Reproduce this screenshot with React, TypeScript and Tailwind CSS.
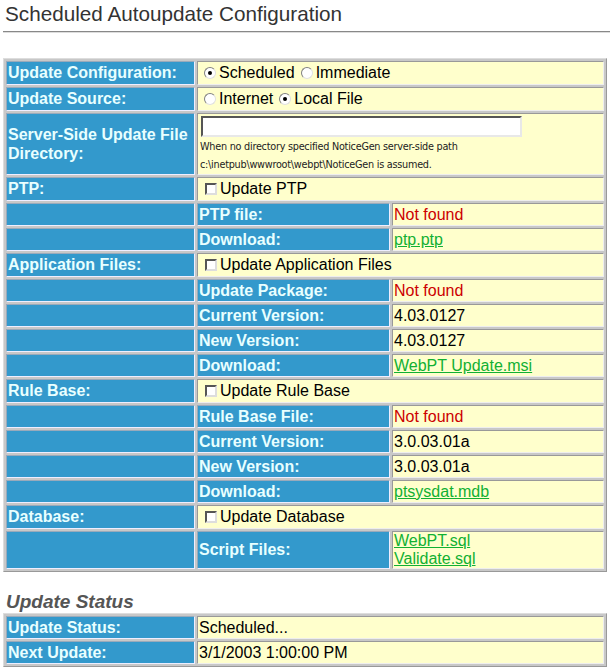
import React from 'react'

const LABEL = 'bg-[#3399cc] text-[#e8ffff] font-bold px-[1px] py-0 align-middle border border-t-[#9ab] border-l-[#9ab] border-b-[#eef] border-r-[#eef]'
const VALUE = 'bg-[#ffffcc] text-black px-[1px] py-0 align-middle border border-t-[#999] border-l-[#999] border-b-[#eee] border-r-[#eee] whitespace-nowrap'
const LINK = 'text-[#11b033] underline'

function Radio({ checked }: { checked?: boolean }) {
  return (
    <span className="flex items-center justify-center w-[12px] h-[12px] rounded-full bg-white border border-t-[#808080] border-l-[#808080] border-b-[#e0e0e0] border-r-[#e0e0e0] ml-[5px] mr-[3px]">
      {checked && <span className="block w-[4px] h-[4px] rounded-full bg-black" />}
    </span>
  )
}

function Check() {
  return (
    <span className="block w-[12px] h-[12px] bg-white border-2 border-t-[#555] border-l-[#555] border-b-[#ddd] border-r-[#ddd] ml-[6px] mr-[3px]" />
  )
}

// top-level rows (radio / checkbox) sit one pixel taller than the sub rows
function Row({ label, value }: { label: string; value: React.ReactNode }) {
  return (
    <tr className="h-[24px]">
      <td className={LABEL + ' whitespace-nowrap'}>{label}</td>
      <td colSpan={2} className={VALUE}>
        <div className="flex items-center">{value}</div>
      </td>
    </tr>
  )
}

function SubRow({ label, value }: { label: string; value: React.ReactNode }) {
  return (
    <tr className="h-[23px]">
      <td className={LABEL}></td>
      <td className={LABEL + ' whitespace-nowrap'}>{label}</td>
      <td className={VALUE}>{value}</td>
    </tr>
  )
}

const NotFound = <span className="text-[#cc0000]">Not found</span>

export default function App() {
  return (
    <div className="w-[610px] h-[671px] bg-white overflow-hidden font-['Liberation_Sans',Arial,sans-serif] text-[16px] leading-[18px]">
      <div className="pl-[5px] pt-[2px] text-[20.7px] leading-[24px] text-[#333]">Scheduled Autoupdate Configuration</div>
      <div className="ml-[3px] mt-[5px] h-[2px] border-t border-t-[#888] border-b border-b-[#ddd]" />

      <table className="mt-[25px] ml-[3px] w-[604px] table-fixed border-separate border-spacing-[2px] bg-[#c8c8c8] border border-t-[#ddd] border-l-[#ddd] border-b-[#999] border-r-[#999]">
        <colgroup>
          <col className="w-[189px]" />
          <col className="w-[193px]" />
          <col />
        </colgroup>
        <tbody>
          <Row label="Update Configuration:" value={<><Radio checked /><span className="mr-[1px]">Scheduled</span><Radio />Immediate</>} />
          <Row label="Update Source:" value={<><Radio /><span className="mr-[1px]">Internet</span><Radio checked />Local File</>} />
          <tr className="h-[58px]">
            <td className={LABEL + ' leading-[19px]'}>Server-Side Update File Directory:</td>
            <td colSpan={2} className={VALUE + ' align-top'}>
              <div className="mt-[2px] ml-[2px] w-[321px] h-[21px] bg-white border-2 border-t-[#555] border-l-[#555] border-b-[#e8e8e8] border-r-[#e8e8e8]" />
              <div className="ml-[1px] mt-[1px] text-[9.7px] leading-[18px] text-[#222] font-['DejaVu_Sans',Verdana,sans-serif] tracking-[-0.25px]">
                <div>When no directory specified NoticeGen server-side path</div>
                <div>c:\inetpub\wwwroot\webpt\NoticeGen is assumed.</div>
              </div>
            </td>
          </tr>
          <Row label="PTP:" value={<><Check />Update PTP</>} />
          <SubRow label="PTP file:" value={NotFound} />
          <SubRow label="Download:" value={<span className={LINK}>ptp.ptp</span>} />
          <Row label="Application Files:" value={<><Check />Update Application Files</>} />
          <SubRow label="Update Package:" value={NotFound} />
          <SubRow label="Current Version:" value="4.03.0127" />
          <SubRow label="New Version:" value="4.03.0127" />
          <SubRow label="Download:" value={<span className={LINK}>WebPT Update.msi</span>} />
          <Row label="Rule Base:" value={<><Check />Update Rule Base</>} />
          <SubRow label="Rule Base File:" value={NotFound} />
          <SubRow label="Current Version:" value="3.0.03.01a" />
          <SubRow label="New Version:" value="3.0.03.01a" />
          <SubRow label="Download:" value={<span className={LINK}>ptsysdat.mdb</span>} />
          <Row label="Database:" value={<><Check />Update Database</>} />
          <tr className="h-[38px]">
            <td className={LABEL}></td>
            <td className={LABEL + ' whitespace-nowrap'}>Script Files:</td>
            <td className={VALUE}>
              <div className={LINK}>WebPT.sql</div>
              <div className={LINK}>Validate.sql</div>
            </td>
          </tr>
        </tbody>
      </table>

      <div className="mt-[19px] pl-[6px] text-[19px] leading-[22px] font-bold italic text-[#555]">Update Status</div>

      <table className="ml-[3px] w-[604px] table-fixed border-separate border-spacing-[2px] bg-[#c8c8c8] border border-t-[#ddd] border-l-[#ddd] border-b-[#999] border-r-[#999]">
        <colgroup>
          <col className="w-[189px]" />
          <col />
        </colgroup>
        <tbody>
          <tr className="h-[23px]">
            <td className={LABEL + ' whitespace-nowrap'}>Update Status:</td>
            <td className={VALUE}>Scheduled...</td>
          </tr>
          <tr className="h-[23px]">
            <td className={LABEL + ' whitespace-nowrap'}>Next Update:</td>
            <td className={VALUE}>3/1/2003 1:00:00 PM</td>
          </tr>
        </tbody>
      </table>
    </div>
  )
}
